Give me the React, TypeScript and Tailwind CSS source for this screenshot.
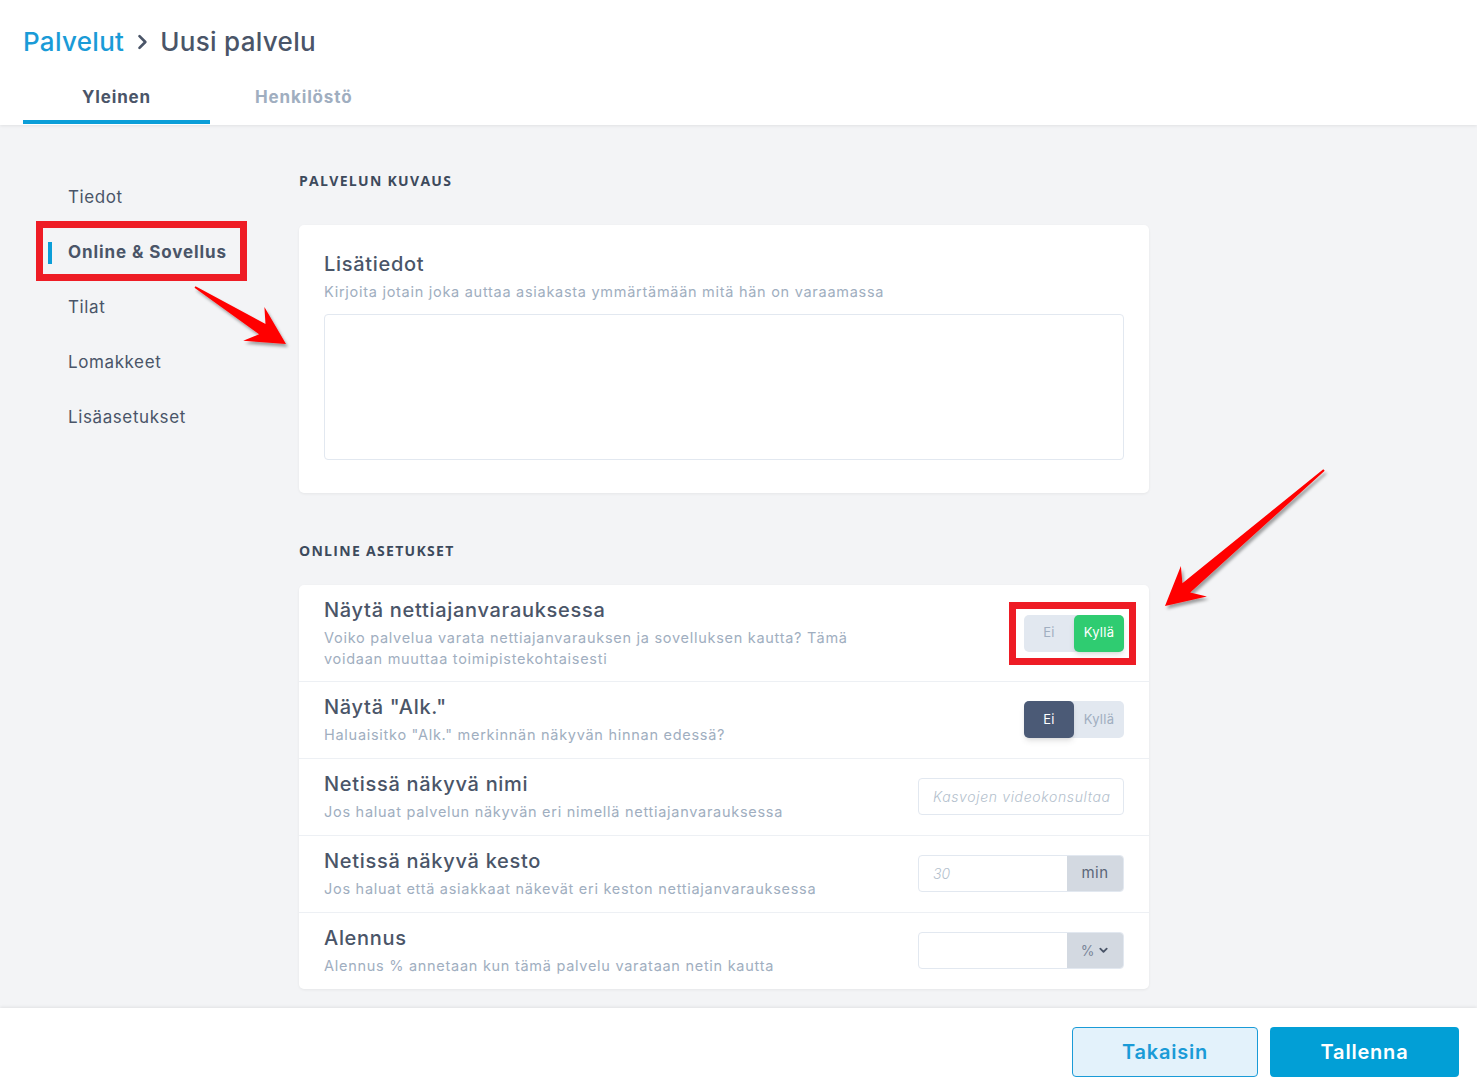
import React from 'react';

const font = "font-['Inter','Noto_Sans',sans-serif]";

type Pt = [number, number];

// builds the tapered annotation arrow from tail to tip
function arrowPoints(tail: Pt, tip: Pt) {
  const dx = tip[0] - tail[0];
  const dy = tip[1] - tail[1];
  const len = Math.hypot(dx, dy);
  const ux = dx / len;
  const uy = dy / len;
  const nx = -uy;
  const ny = ux;
  const at = (along: number, perp: number) =>
    `${(tail[0] + ux * along + nx * perp).toFixed(1)},${(tail[1] + uy * along + ny * perp).toFixed(1)}`;
  return [
    at(0, -1),
    at(len - 28, -6),
    at(len - 38, -20),
    at(len, 0),
    at(len - 38, 20),
    at(len - 28, 6),
    at(0, 1)
  ].join(' ');
}

function Toggle({ yes }: { yes: boolean }) {
  return (
    <div className="flex h-[37px] w-[100px] rounded-[5px] bg-[#e2e8f0] text-[13px] tracking-[0.3px]">
      <div
        className={
          yes
            ? 'flex w-1/2 items-center justify-center text-[#a0aec0]'
            : 'flex w-1/2 items-center justify-center rounded-[5px] bg-[#4b5a76] text-white shadow-md'
        }
      >
        Ei
      </div>
      <div
        className={
          yes
            ? 'flex w-1/2 items-center justify-center rounded-[5px] bg-[#2fcc71] text-white shadow-md'
            : 'flex w-1/2 items-center justify-center text-[#a0aec0]'
        }
      >
        Kyllä
      </div>
    </div>
  );
}

function Row({
  title,
  desc,
  children,
  first,
  last
}: {
  title: string;
  desc: string;
  children: React.ReactNode;
  first?: boolean;
  last?: boolean;
}) {
  return (
    <div
      className={
        'flex items-center justify-between px-[25px] pt-[12px] ' +
        (first ? 'pb-[12px] ' : 'pb-[13px] ') +
        (last ? '' : 'border-b border-[#edf0f4]')
      }
    >
      <div className="w-[540px]">
        <div className="text-[20px] leading-[26px] font-medium tracking-[0.7px] text-[#4a5568]">{title}</div>
        <div className="mt-[4px] text-[14.5px] leading-[21px] tracking-[0.72px] text-[#a0aec0]">{desc}</div>
      </div>
      {children}
    </div>
  );
}

function App() {
  const sideItems = ['Tiedot', 'Online & Sovellus', 'Tilat', 'Lomakkeet', 'Lisäasetukset'];

  return (
    <div className={`relative flex h-[1092px] w-full flex-col overflow-hidden bg-[#f3f4f6] ${font}`}>
      <header className="z-10 h-[125px] bg-white px-[23px] shadow-[0_1px_3px_rgba(0,0,0,0.08)]">
        <div className="flex items-center pt-[26px] text-[26px] leading-[32px] font-medium tracking-[0.3px]">
          <span className="text-[#1a9bd7]">Palvelut</span>
          <svg className="mx-[8px] h-[20px] w-[20px] text-[#4a5568]" viewBox="0 0 24 24" fill="none">
            <path d="M9 5l7 7-7 7" stroke="currentColor" strokeWidth="3.2" strokeLinecap="round" strokeLinejoin="round" />
          </svg>
          <span className="text-[#4a5568]">Uusi palvelu</span>
        </div>
        <div className="mt-[29px] flex text-[17px] leading-[20px] font-bold tracking-[0.85px]">
          <div className="w-[187px] border-b-4 border-[#0b9ed8] pb-[13px] text-center text-[#4a5568]">Yleinen</div>
          <div className="ml-[45px] pb-[13px] text-[#a0aec0]">Henkilöstö</div>
        </div>
      </header>

      <main className="flex flex-1">
        <nav className="w-[299px] pt-[45px]">
          {sideItems.map((item) => (
            <div key={item} className="flex h-[55px] items-center pl-[48px] text-[17px] text-[#4a5568]">
              {item === 'Online & Sovellus' ? (
                <>
                  <span className="h-[22px] w-[4px] bg-[#0b9ed8]" />
                  <span className="ml-[16px] font-bold tracking-[0.9px]">{item}</span>
                </>
              ) : (
                <span className="ml-[20px] tracking-[0.6px]">{item}</span>
              )}
            </div>
          ))}
        </nav>

        <section className="w-[850px] pt-[46px]">
          <h2 className="font-['Open_Sans',sans-serif] text-[14px] leading-[20px] font-bold tracking-[1.3px] text-[#3d4a5c]">PALVELUN KUVAUS</h2>
          <div className="mt-[34px] rounded-[5px] bg-white px-[25px] pt-[25px] pb-[33px] shadow-[0_1px_3px_rgba(0,0,0,0.06)]">
            <div className="text-[20px] leading-[28px] font-medium tracking-[0.7px] text-[#4a5568]">Lisätiedot</div>
            <div className="mt-[4px] text-[14.5px] leading-[20px] tracking-[0.72px] text-[#a0aec0]">
              Kirjoita jotain joka auttaa asiakasta ymmärtämään mitä hän on varaamassa
            </div>
            <div className="mt-[12px] h-[146px] rounded-[4px] border border-[#e2e8f0]" />
          </div>

          <h2 className="mt-[48px] font-['Open_Sans',sans-serif] text-[14px] leading-[20px] font-bold tracking-[1.3px] text-[#3d4a5c]">ONLINE ASETUKSET</h2>
          <div className="mt-[24px] rounded-[5px] bg-white shadow-[0_1px_3px_rgba(0,0,0,0.06)]">
            <Row
              first
              title="Näytä nettiajanvarauksessa"
              desc="Voiko palvelua varata nettiajanvarauksen ja sovelluksen kautta? Tämä voidaan muuttaa toimipistekohtaisesti"
            >
              <Toggle yes />
            </Row>
            <Row title='Näytä "Alk."' desc='Haluaisitko "Alk." merkinnän näkyvän hinnan edessä?'>
              <Toggle yes={false} />
            </Row>
            <Row title="Netissä näkyvä nimi" desc="Jos haluat palvelun näkyvän eri nimellä nettiajanvarauksessa">
              <div className="flex h-[37px] w-[206px] items-center overflow-hidden rounded-[4px] border border-[#e2e8f0] px-[14px] text-[14px] font-light tracking-[0.65px] whitespace-nowrap text-[#b4bfcd] italic">
                Kasvojen videokonsultaa
              </div>
            </Row>
            <Row title="Netissä näkyvä kesto" desc="Jos haluat että asiakkaat näkevät eri keston nettiajanvarauksessa">
              <div className="flex h-[37px] w-[206px] overflow-hidden rounded-[4px] border border-[#e2e8f0]">
                <div className="flex flex-1 items-center px-[14px] text-[14px] font-light text-[#b4bfcd] italic">30</div>
                <div className="flex w-[56px] items-center justify-center bg-[#d3d9e1] text-[15px] tracking-[0.5px] text-[#5a6678]">min</div>
              </div>
            </Row>
            <Row title="Alennus" desc="Alennus % annetaan kun tämä palvelu varataan netin kautta" last>
              <div className="flex h-[37px] w-[206px] overflow-hidden rounded-[4px] border border-[#e2e8f0]">
                <div className="flex-1" />
                <div className="flex w-[56px] items-center justify-center gap-[4px] bg-[#d3d9e1] text-[14px] text-[#7a8699]">
                  %
                  <svg className="h-[11px] w-[11px] text-[#4a5568]" viewBox="0 0 24 24" fill="none">
                    <path d="M5 8l7 7 7-7" stroke="currentColor" strokeWidth="4" strokeLinecap="round" strokeLinejoin="round" />
                  </svg>
                </div>
              </div>
            </Row>
          </div>
        </section>
      </main>

      <footer className="z-10 flex h-[84px] justify-end gap-[12px] bg-white pt-[19px] pr-[18px] shadow-[0_-1px_3px_rgba(0,0,0,0.08)]">
        <button className="h-[50px] w-[186px] rounded-[4px] border border-[#1a9bd7] bg-[#e3f2fb] text-[20px] font-semibold tracking-[0.8px] text-[#1a9bd7]">
          Takaisin
        </button>
        <button className="h-[50px] w-[189px] rounded-[4px] bg-[#029fd6] text-[20px] font-semibold tracking-[0.8px] text-white">
          Tallenna
        </button>
      </footer>

      {/* annotation overlays */}
      <div className="pointer-events-none absolute top-[221px] left-[36px] h-[60px] w-[211px] border-[7px] border-[#ee1c25]" />
      <div className="pointer-events-none absolute top-[602px] left-[1009px] h-[63px] w-[127px] border-[7px] border-[#ee1c25]" />
      <svg className="pointer-events-none absolute inset-0" width="1477" height="1092">
        <defs>
          <filter id="arrowShadow" x="-20%" y="-20%" width="140%" height="140%">
            <feDropShadow dx="2" dy="3" stdDeviation="1.5" floodColor="#000" floodOpacity="0.35" />
          </filter>
        </defs>
        <polygon points={arrowPoints([195, 287], [286, 344])} fill="#ff0000" filter="url(#arrowShadow)" />
        <polygon points={arrowPoints([1324, 470], [1165, 606])} fill="#ff0000" filter="url(#arrowShadow)" />
      </svg>
    </div>
  );
}

export default App;
